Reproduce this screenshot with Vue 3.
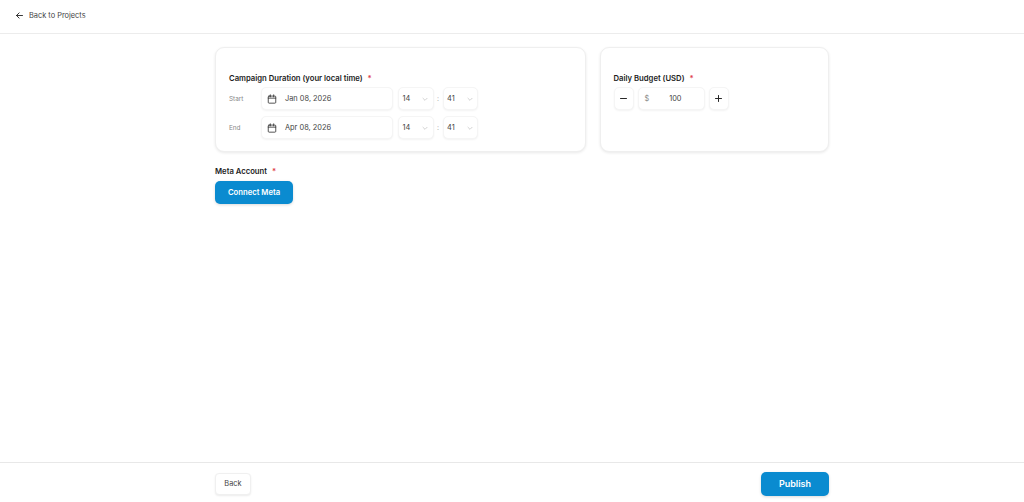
<script setup>
const rows = [
  { label: 'Start', date: 'Jan 08, 2026', hour: '14', minute: '41' },
  { label: 'End', date: 'Apr 08, 2026', hour: '14', minute: '41' },
]
</script>

<template>
  <div class="page">
    <header class="top">
      <svg class="arrow" viewBox="0 0 24 24" width="9" height="9" fill="none" stroke="#222" stroke-width="2.4" stroke-linecap="round" stroke-linejoin="round"><path d="M20 12H4M11 5l-7 7 7 7" /></svg>
      <span>Back to Projects</span>
    </header>

    <main class="main">
      <div class="cards">
        <section class="card duration">
          <div class="label">Campaign Duration (your local time) <i>*</i></div>
          <div v-for="row in rows" :key="row.label" class="row">
            <span class="rowlabel">{{ row.label }}</span>
            <div class="field date">
              <svg viewBox="0 0 24 24" width="10" height="10" fill="none" stroke="#333" stroke-width="2" stroke-linecap="round" stroke-linejoin="round"><rect x="3" y="5" width="18" height="17" rx="2" /><path d="M8 2v5M16 2v5M3 10h18" /></svg>
              <span>{{ row.date }}</span>
            </div>
            <div class="field select">
              <span>{{ row.hour }}</span>
              <svg viewBox="0 0 24 24" width="8" height="8" fill="none" stroke="#bbb" stroke-width="2"><path d="M5 9l7 7 7-7" /></svg>
            </div>
            <span class="colon">:</span>
            <div class="field select">
              <span>{{ row.minute }}</span>
              <svg viewBox="0 0 24 24" width="8" height="8" fill="none" stroke="#bbb" stroke-width="2"><path d="M5 9l7 7 7-7" /></svg>
            </div>
          </div>
        </section>

        <section class="card budget">
          <div class="label">Daily Budget (USD) <i>*</i></div>
          <div class="stepper">
            <div class="field step">
              <svg viewBox="0 0 24 24" width="9" height="9" fill="none" stroke="#222" stroke-width="2.6" stroke-linecap="round"><path d="M4 12h16" /></svg>
            </div>
            <div class="field amount"><span class="dollar">$</span><span>100</span></div>
            <div class="field step">
              <svg viewBox="0 0 24 24" width="9" height="9" fill="none" stroke="#222" stroke-width="2.6" stroke-linecap="round"><path d="M4 12h16M12 4v16" /></svg>
            </div>
          </div>
        </section>
      </div>

      <div class="label meta">Meta Account <i>*</i></div>
      <button class="primary connect" type="button">Connect Meta</button>
    </main>

    <footer class="bottom">
      <div class="bottom-inner">
        <button class="back" type="button">Back</button>
        <button class="primary publish" type="button">Publish</button>
      </div>
    </footer>
  </div>
</template>

<style scoped>
.page {
  width: 1024px;
  height: 502px;
  display: flex;
  flex-direction: column;
  background: #fff;
  font-family: Inter, "Liberation Sans", sans-serif;
  color: #333;
  overflow: hidden;
}
.top {
  flex: none;
  display: flex;
  align-items: center;
  gap: 5px;
  padding: 0 0 3px 15px;
  box-sizing: border-box;
  height: 34px;
  border-bottom: 1px solid #ececec;
  font-size: 7.4px;
  color: #444;
}
.main {
  flex: 1;
  width: 614px;
  margin-left: 215px;
  padding-top: 13px;
}
.cards {
  display: flex;
  gap: 14px;
}
.card {
  height: 105px;
  box-sizing: border-box;
  background: #fff;
  border: 1px solid #efefef;
  border-radius: 9px;
  box-shadow: 0 1px 3px rgba(0, 0, 0, 0.09);
  padding: 25px 13px 0;
}
.duration { width: 371px; }
.budget { width: 229px; padding-left: 12.5px; }
.label {
  font-size: 7.7px;
  line-height: 11px;
  font-weight: 600;
  color: #1c1c1c;
}
.label i {
  font-style: normal;
  color: #e0424c;
  margin-left: 3px;
}
.row {
  display: flex;
  align-items: center;
  margin-top: 3px;
  height: 23px;
}
.row + .row { margin-top: 6px; }
.rowlabel {
  width: 32px;
  flex: none;
  font-size: 6.4px;
  color: #888;
}
.field {
  box-sizing: border-box;
  height: 23px;
  display: flex;
  align-items: center;
  background: #fff;
  border: 1px solid #f5f5f5;
  border-radius: 5px;
  box-shadow: 0 1px 2px rgba(0, 0, 0, 0.05);
  font-size: 7.4px;
  color: #444;
}
.date {
  width: 132px;
  gap: 8px;
  padding-left: 5px;
}
.select {
  width: 35.5px;
  justify-content: space-between;
  padding: 0 3.5px;
  margin-left: 5px;
}
.colon {
  width: 9px;
  margin-right: -5px;
  text-align: center;
  font-size: 7px;
  color: #aaa;
}
.stepper {
  display: flex;
  gap: 4px;
  margin-top: 3px;
}
.step {
  width: 20px;
  justify-content: center;
}
.amount {
  width: 67px;
  justify-content: space-between;
  padding: 0 22px 0 6px;
}
.dollar { color: #888; }
.meta { margin-top: 14px; }
button {
  font-family: inherit;
  cursor: pointer;
}
.primary {
  display: block;
  border: none;
  background: #0a8bd0;
  color: #fff;
  font-weight: 600;
  box-shadow: 0 1px 3px rgba(0, 0, 0, 0.15);
}
.connect {
  margin-top: 4px;
  width: 78px;
  height: 23px;
  border-radius: 5px;
  font-size: 7.7px;
  padding: 0;
}
.bottom {
  flex: none;
  height: 40px;
  box-sizing: border-box;
  border-top: 1px solid #e8e8e8;
}
.bottom-inner {
  width: 614px;
  margin-left: 215px;
  display: flex;
  justify-content: space-between;
  align-items: center;
  height: 41px;
}
.back {
  width: 36px;
  height: 22px;
  padding: 0;
  background: #fff;
  border: 1px solid #f0f0f0;
  border-radius: 4px;
  box-shadow: 0 1px 2px rgba(0, 0, 0, 0.08);
  font-size: 7.4px;
  color: #444;
}
.publish {
  width: 68px;
  height: 24px;
  padding: 0;
  border-radius: 5px;
  font-size: 9px;
}
</style>
